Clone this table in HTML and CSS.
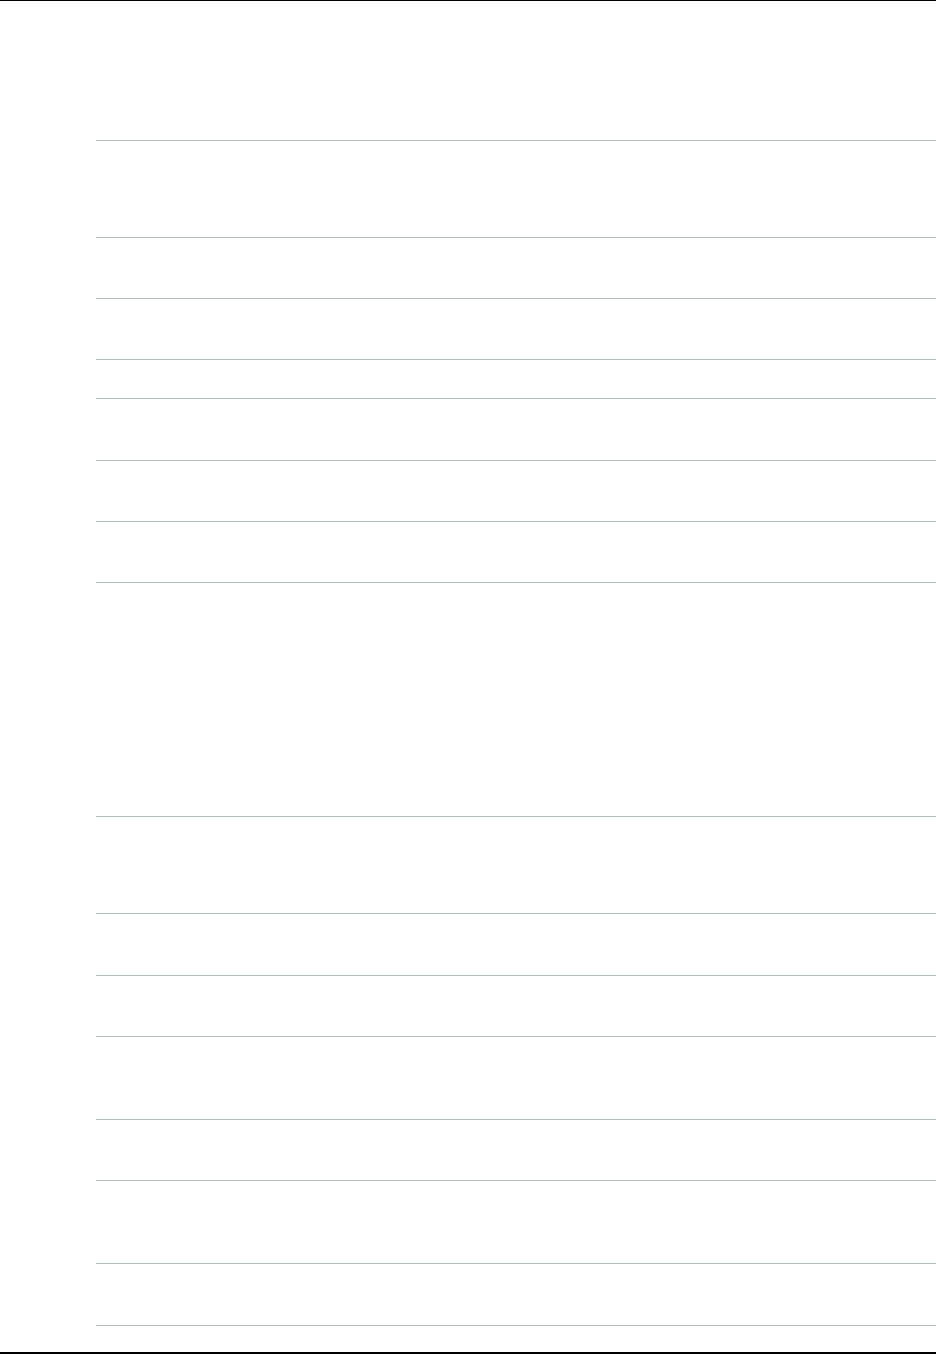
FILE: index.html
```html
<!DOCTYPE html>
<html lang="en">
<head>
    <meta charset="UTF-8">
    <meta name="viewport" content="width=device-width, initial-scale=1.0">
    <title>Table</title>
    <link rel="stylesheet" href="styles.css">
</head>
<body>
<div class="page">
    <div class="table">
        <div class="row h97"></div>
        <div class="row h61"></div>
        <div class="row h61"></div>
        <div class="row h39"></div>
        <div class="row h62"></div>
        <div class="row h61"></div>
        <div class="row h61"></div>
        <div class="row h234"></div>
        <div class="row h97"></div>
        <div class="row h62"></div>
        <div class="row h61"></div>
        <div class="row h83"></div>
        <div class="row h61"></div>
        <div class="row h83"></div>
        <div class="row h62"></div>
    </div>
</div>
</body>
</html>
```

FILE: styles.css
```css
body {
    margin: 0;
    padding: 0;
    background: #ffffff;
    font-family: "Liberation Sans", Arial, sans-serif;
}

.page {
    box-sizing: border-box;
    height: 1354px;
    border-top: 1px solid #000000;
    border-bottom: 2px solid #000000;
    padding: 139px 0 0 96px;
}

.table {
    border-bottom: 1px solid #b4c0bc;
}

.row {
    box-sizing: border-box;
    border-top: 1px solid #b4c0bc;
}

.h39 { height: 39px; }
.h61 { height: 61px; }
.h62 { height: 62px; }
.h83 { height: 83px; }
.h97 { height: 97px; }
.h234 { height: 234px; }
```
